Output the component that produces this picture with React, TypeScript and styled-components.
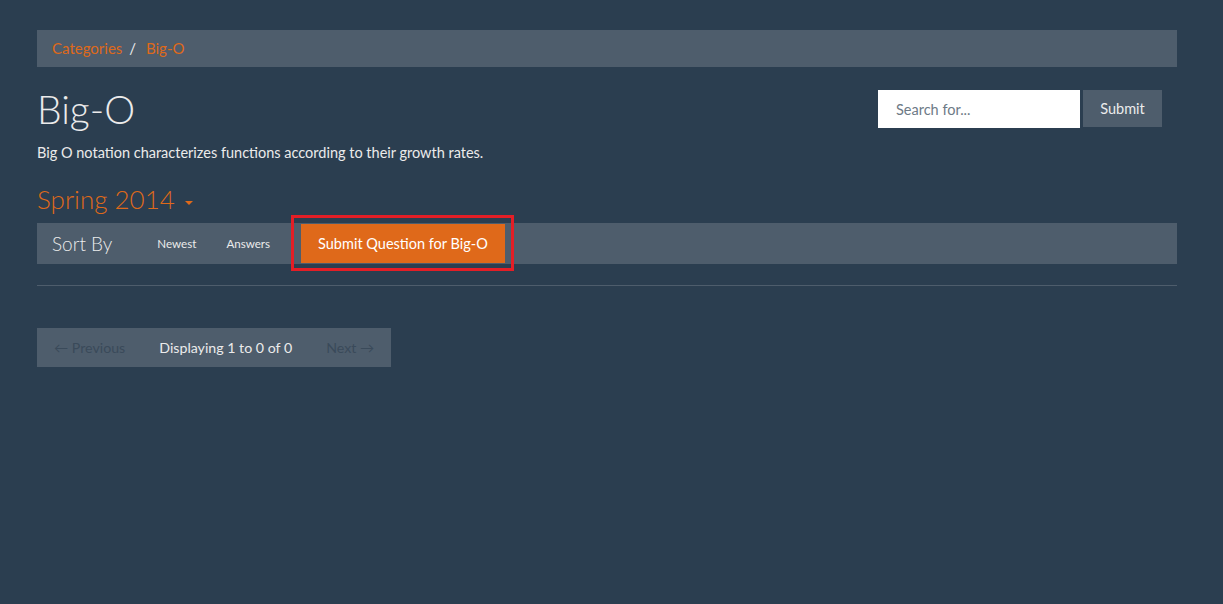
import React from 'react';
import styled, { createGlobalStyle } from 'styled-components';

const Global = createGlobalStyle`
  html, body { margin: 0; padding: 0; background: #2b3e50; }
  body {
    font-family: Lato, "Helvetica Neue", Helvetica, Arial, sans-serif;
    font-size: 14.5px;
    line-height: 21px;
    color: #ebebeb;
  }
  * { box-sizing: border-box; }
`;

const Container = styled.div`
  width: 1140px;
  margin-left: 37px;
  padding-top: 30px;
`;

const Breadcrumb = styled.ol`
  display: flex;
  list-style: none;
  margin: 0 0 21px;
  padding: 8px 15px;
  background: #4e5d6c;
  font-size: 15px;
  line-height: 21px;
`;

const Crumb = styled.li`
  & + &::before {
    content: "/\\00a0";
    padding: 0 6px 0 7px;
    color: #ebebeb;
  }
`;

const Link = styled.a`
  color: #df691a;
  text-decoration: none;
`;

const HeaderRow = styled.div`
  display: flex;
  justify-content: space-between;
  align-items: flex-start;
`;

const Intro = styled.div``;

const Title = styled.h1`
  margin: 0 0 10.5px;
  font-size: 39px;
  font-weight: 300;
  line-height: 1.1;
  color: #ebebeb;
`;

const Lead = styled.p`
  margin: 0;
  padding-top: 1px;
`;

const SearchForm = styled.form`
  display: flex;
  gap: 3px;
  margin-top: 2px;
  padding-right: 15px;
`;

const SearchInput = styled.input`
  width: 202px;
  height: 38px;
  border: none;
  padding: 8px 18px;
  font-family: inherit;
  font-size: 14.5px;
  color: #2b3e50;
  background: #fff;
  outline: none;
  &::placeholder { color: #6d7a86; }
`;

const GreyButton = styled.button`
  width: 79px;
  height: 37px;
  padding: 0;
  border: none;
  background: #4e5d6c;
  color: #ebebeb;
  font-family: inherit;
  font-size: 14.5px;
`;

const Semester = styled.h3`
  margin: 22px 0 9.5px;
  font-size: 26px;
  font-weight: 300;
  line-height: 1.1;
  color: #df691a;
`;

const Caret = styled.span`
  display: inline-block;
  width: 0;
  height: 0;
  margin-left: 3px;
  vertical-align: middle;
  border-top: 4px solid #df691a;
  border-left: 4px solid transparent;
  border-right: 4px solid transparent;
`;

const SortBar = styled.div`
  display: flex;
  align-items: center;
  height: 41px;
  background: #4e5d6c;
  margin-bottom: 21px;
`;

const Brand = styled.span`
  padding: 0 15px;
  font-size: 19px;
  font-weight: 300;
  line-height: 21px;
`;

const Nav = styled.div`
  display: flex;
  margin-left: 15px;
`;

const NavLink = styled.a`
  padding: 0 15px;
  font-size: 11.6px;
  color: #ebebeb;
  text-decoration: none;
`;

const Highlight = styled.div`
  position: relative;
  margin-left: 16px;
  &::after {
    content: "";
    position: absolute;
    left: -10px;
    top: -9px;
    right: -9px;
    bottom: -8px;
    border: 3px solid #e41e26;
    pointer-events: none;
  }
`;

const OrangeButton = styled.button`
  display: block;
  height: 39px;
  padding: 0 17px;
  border: none;
  background: #df691a;
  color: #fff;
  font-family: inherit;
  font-size: 14.5px;
`;

const Rule = styled.hr`
  margin: 0 0 42px;
  border: 0;
  border-top: 1px solid #4e5d6c;
`;

const Pager = styled.ul`
  display: inline-flex;
  list-style: none;
  margin: 0;
  padding: 0;
  background: #4e5d6c;
`;

const PageItem = styled.li<{ $disabled?: boolean }>`
  padding: 8px 16px;
  border: 1px solid transparent;
  font-size: 14.2px;
  line-height: 21px;
  color: ${p => (p.$disabled ? '#3a4a5a' : '#ebebeb')};
`;

export default function App() {
  return (
    <>
      <Global />
      <Container>
        <Breadcrumb>
          <Crumb><Link href="#">Categories</Link></Crumb>
          <Crumb><Link href="#">Big-O</Link></Crumb>
        </Breadcrumb>
        <HeaderRow>
          <Intro>
            <Title>Big-O</Title>
            <Lead>Big O notation characterizes functions according to their growth rates.</Lead>
          </Intro>
          <SearchForm onSubmit={e => e.preventDefault()}>
            <SearchInput placeholder="Search for..." />
            <GreyButton type="submit">Submit</GreyButton>
          </SearchForm>
        </HeaderRow>
        <Semester>
          Spring 2014 <Caret />
        </Semester>
        <SortBar>
          <Brand>Sort By</Brand>
          <Nav>
            <NavLink href="#">Newest</NavLink>
            <NavLink href="#">Answers</NavLink>
          </Nav>
          <Highlight>
            <OrangeButton>Submit Question for Big-O</OrangeButton>
          </Highlight>
        </SortBar>
        <Rule />
        <Pager>
          <PageItem $disabled>&larr; Previous</PageItem>
          <PageItem>Displaying 1 to 0 of 0</PageItem>
          <PageItem $disabled>Next &rarr;</PageItem>
        </Pager>
      </Container>
    </>
  );
}
